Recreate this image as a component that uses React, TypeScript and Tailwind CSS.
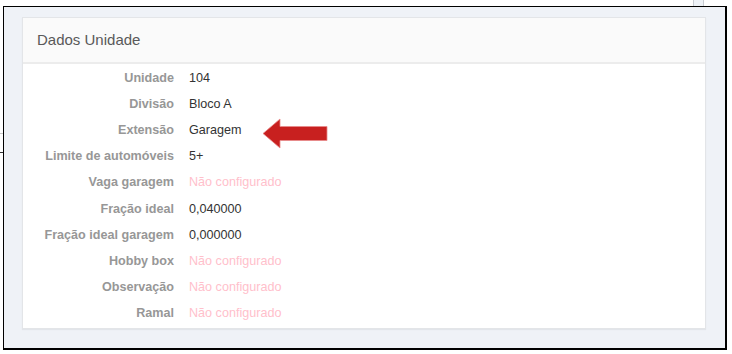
import React from "react";

type Row = { label: string; value?: string };

const rows: Row[] = [
  { label: "Unidade", value: "104" },
  { label: "Divisão", value: "Bloco A" },
  { label: "Extensão", value: "Garagem" },
  { label: "Limite de automóveis", value: "5+" },
  { label: "Vaga garagem" },
  { label: "Fração ideal", value: "0,040000" },
  { label: "Fração ideal garagem", value: "0,000000" },
  { label: "Hobby box" },
  { label: "Observação" },
  { label: "Ramal" },
];

function Arrow() {
  return (
    <svg width="66" height="32" viewBox="0 0 66 32" className="absolute left-[88px] top-[-3px]">
      <path
        d="M1 15.5 L18 1 L18 8.5 L65 8.5 L65 22.5 L18 22.5 L18 30 Z"
        fill="#c8201f"
        stroke="#e88a8a"
        strokeWidth="0.8"
        strokeLinejoin="round"
      />
    </svg>
  );
}

export default function App() {
  return (
    <div className="relative w-[732px] h-[354px] bg-white pl-[3px] pt-[6px] font-['Liberation_Sans',Arial,sans-serif]">
      {/* bits of the page behind the dialog */}
      <div className="absolute left-0 top-[133px] w-[4px] h-px bg-[#c8c8c8]" />
      <div className="absolute left-0 top-[152px] w-[4px] h-px bg-[#333]" />
      <div className="absolute left-[693px] top-0 w-[11px] h-[7px] border-x border-[#c8ccd2] bg-[#eef2f7]" />

      <div className="relative w-[724px] h-[344px] border-l border-t border-r-2 border-b-2 border-black bg-[#eff2f7] pl-[18px] pr-[19px] pt-[10px]">
        <div className="border border-[#e3e5e8] bg-white shadow-[0_1px_1px_rgba(0,0,0,0.05)]">
          <div className="h-[46px] flex items-center px-[14px] bg-[#fafafa] border-b-2 border-[#ececec] text-[15px] text-[#595959]">
            Dados Unidade
          </div>
          <div className="pt-px pb-px">
            {rows.map((r) => (
              <div key={r.label} className="h-[26.2px] flex items-center text-[12.6px]">
                <div className="w-[151px] text-right font-bold text-[#979797]">{r.label}</div>
                <div className="relative pl-[15px]">
                  {r.value ? (
                    <span className="text-[#333]">{r.value}</span>
                  ) : (
                    <span className="text-[#ffc0cb]">Não configurado</span>
                  )}
                  {r.label === "Extensão" && <Arrow />}
                </div>
              </div>
            ))}
          </div>
        </div>
      </div>
    </div>
  );
}
